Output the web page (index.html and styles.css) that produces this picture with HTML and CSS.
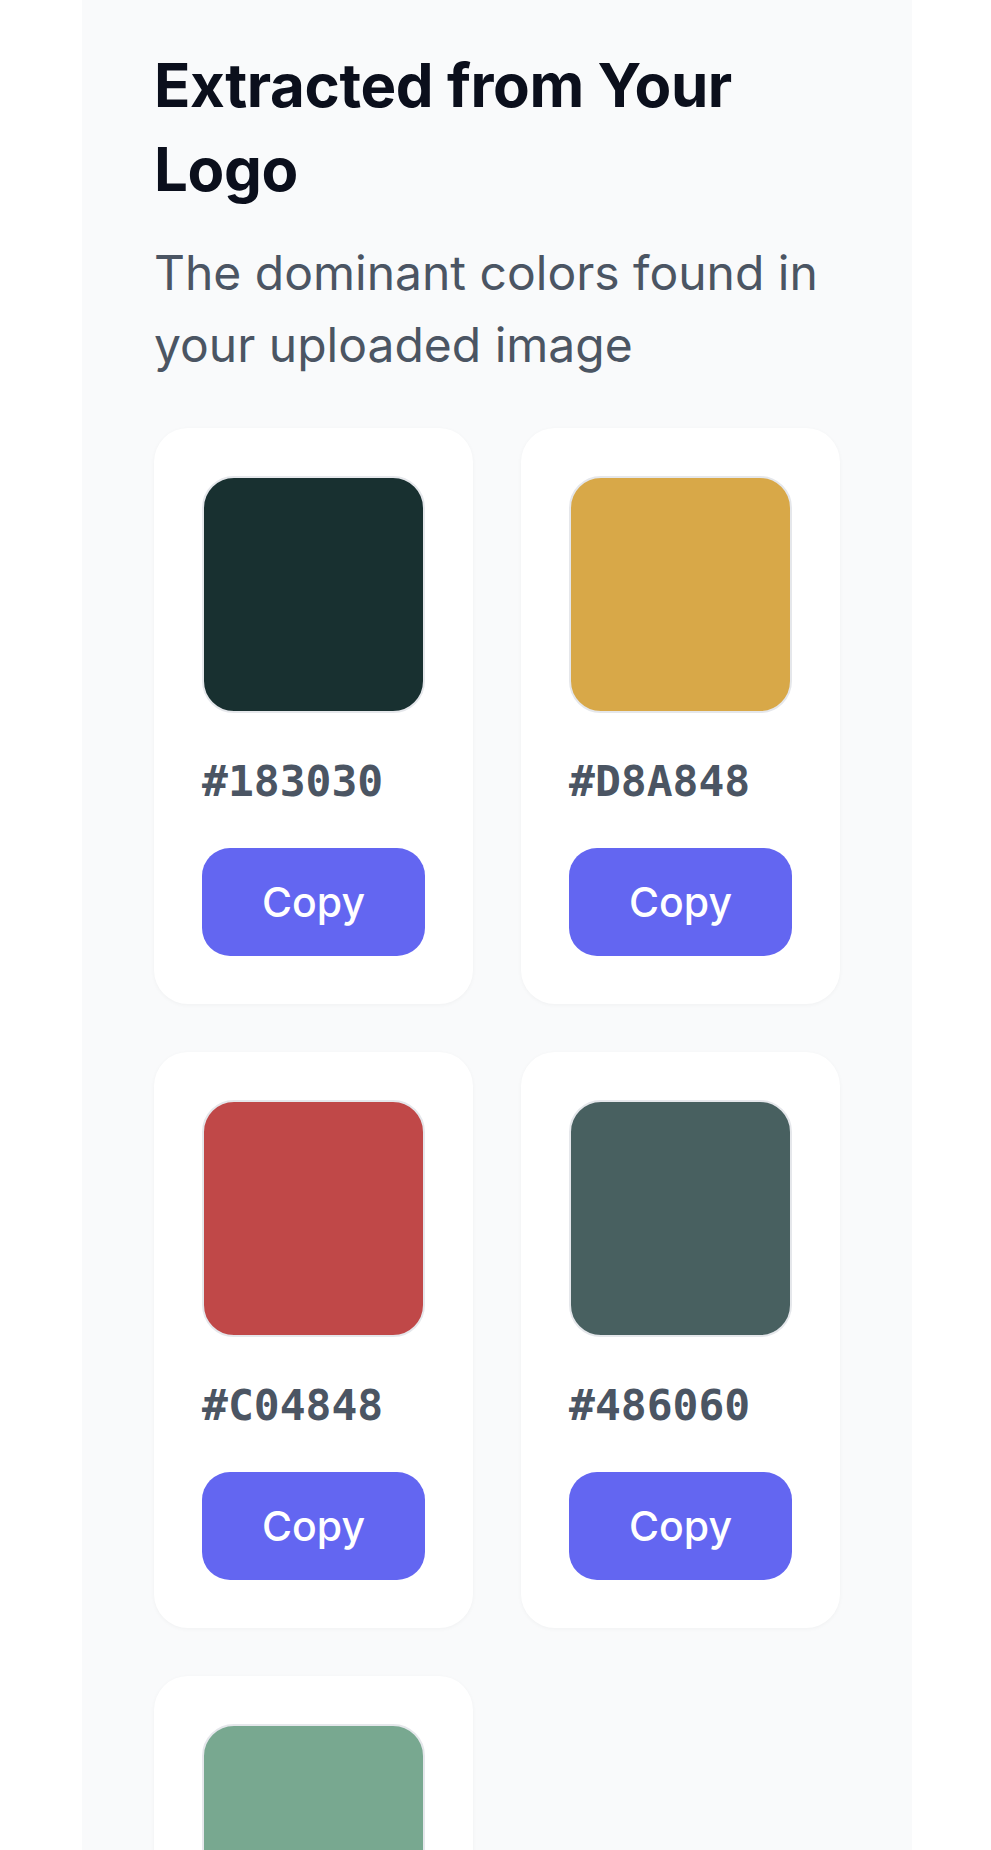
FILE: index.html
```html
<!DOCTYPE html>
<html lang="en">
<head>
  <meta charset="UTF-8" />
  <meta name="viewport" content="width=device-width, initial-scale=1.0"/>
  <title>Extracted Colors</title>
  <link rel="stylesheet" href="styles.css">
</head>
<body>

  <div class="page">
    <!-- Extracted palette section -->
    <section class="palette-panel">
      <h2 class="palette-title">Extracted from Your Logo</h2>
      <p class="palette-subtitle">The dominant colors found in your uploaded image</p>

      <div class="swatch-grid">
        <div class="swatch-card">
          <div class="swatch" style="background-color: #183030;"></div>
          <div class="swatch-hex">#183030</div>
          <button class="copy-button">Copy</button>
        </div>
        <div class="swatch-card">
          <div class="swatch" style="background-color: #D8A848;"></div>
          <div class="swatch-hex">#D8A848</div>
          <button class="copy-button">Copy</button>
        </div>
        <div class="swatch-card">
          <div class="swatch" style="background-color: #C04848;"></div>
          <div class="swatch-hex">#C04848</div>
          <button class="copy-button">Copy</button>
        </div>
        <div class="swatch-card">
          <div class="swatch" style="background-color: #486060;"></div>
          <div class="swatch-hex">#486060</div>
          <button class="copy-button">Copy</button>
        </div>
        <div class="swatch-card">
          <div class="swatch" style="background-color: #78A890;"></div>
          <div class="swatch-hex">#78A890</div>
          <button class="copy-button">Copy</button>
        </div>
      </div>
    </section>
  </div>

</body>
</html>
```

FILE: styles.css
```css
body {
  margin: 0;
  font-family: Inter, "Noto Sans", sans-serif;
  background: #ffffff;
}

.page {
  height: 100vh;
  overflow: hidden;
}

.palette-panel {
  box-sizing: border-box;
  width: 830px;
  min-height: 100%;
  margin-left: 82px;
  padding: 43px 72px 0;
  background-color: #f9fafb;
}

.palette-title {
  margin: 0;
  font-size: 60px;
  line-height: 84px;
  font-weight: 700;
  letter-spacing: -0.4px;
  color: #0b0f1c;
}

.palette-subtitle {
  margin: 26px 0 0;
  font-size: 48px;
  line-height: 72px;
  color: #4b5563;
}

.swatch-grid {
  display: grid;
  grid-template-columns: 1fr 1fr;
  gap: 48px;
  margin-top: 47px;
}

.swatch-card {
  background-color: white;
  border-radius: 34px;
  padding: 48px;
  box-shadow: 0 1px 4px rgba(0, 0, 0, 0.04);
}

.swatch {
  box-sizing: border-box;
  height: 237px;
  border: 2px solid #e5e7eb;
  border-radius: 32px;
}

.swatch-hex {
  margin: 37px 0 35px;
  font-family: "DejaVu Sans Mono", "Liberation Mono", monospace;
  font-size: 43px;
  line-height: 63px;
  font-weight: 700;
  color: #4b5563;
}

.copy-button {
  display: block;
  width: 100%;
  height: 108px;
  padding: 0;
  border: none;
  border-radius: 28px;
  background-color: #6366f1;
  color: white;
  font-family: Inter, "Noto Sans", sans-serif;
  font-size: 41px;
  font-weight: 500;
  cursor: pointer;
}
```
